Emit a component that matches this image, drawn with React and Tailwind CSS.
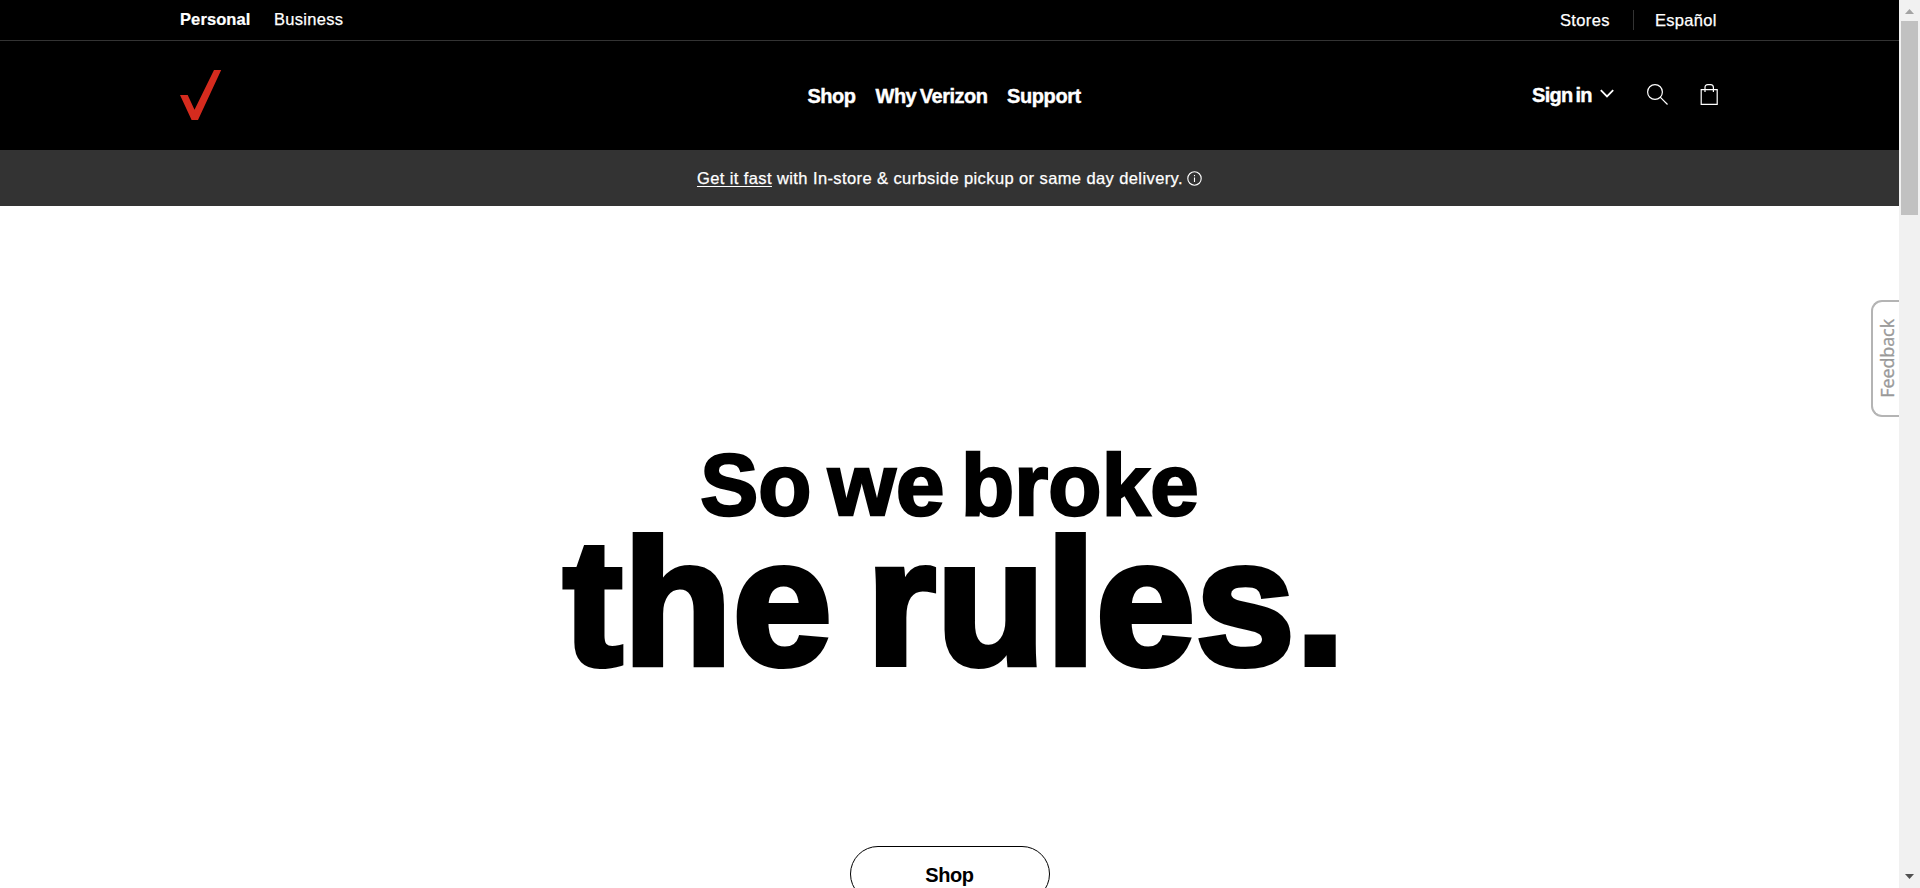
function UtilityBar() {
  return (
    <div className="h-[41px] border-b border-[#333333]">
      <div className="mx-[180px] flex h-full justify-between text-[16.5px] leading-5">
        <div className="flex pt-[9px]">
          <a className="w-[94px] font-bold tracking-[0.1px] [-webkit-text-stroke:0.2px_white]">Personal</a>
          <a className="tracking-[0.3px] [-webkit-text-stroke:0.25px_white]">Business</a>
        </div>
        <div className="flex pt-[10px] mr-px">
          <a className="w-[73px] tracking-[0.35px] [-webkit-text-stroke:0.25px_white]">Stores</a>
          <span className="h-5 w-px bg-[#333333]" />
          <a className="ml-[21px] w-[63px] tracking-[0.3px] [-webkit-text-stroke:0.25px_white]">Español</a>
        </div>
      </div>
    </div>
  );
}

function MainNav() {
  return (
    <header className="flex h-[109px] px-[180px] text-[20px] leading-6 font-bold">
      <svg className="mt-[29px] h-[51px] w-[42px]" viewBox="0 0 42 51" fill="#d52b1e">
        <path d="M34 0h7.2L18 50H11.6L0 25h7.7l6.8 14.8z" />
      </svg>
      <nav className="ml-[585.5px] flex pt-[43px] tracking-[-0.5px] [-webkit-text-stroke:0.4px_white]">
        <a className="w-[68px]">Shop</a>
        <a className="w-[131.5px] whitespace-nowrap [word-spacing:-1.5px]">Why Verizon</a>
        <a className="tracking-[-0.4px]">Support</a>
      </nav>
      <div className="ml-auto flex w-[187px] shrink-0 pt-[42px]">
        <span className="w-[68px] whitespace-nowrap tracking-[-0.7px] [-webkit-text-stroke:0.4px_white] [word-spacing:-2px]">Sign in</span>
        <svg className="mt-1.5 h-[10px] w-[14px]" viewBox="0 0 14 10" fill="none" stroke="white" strokeWidth="1.8">
          <path d="M.8 1.2 7 7.400l6.200-6.200" />
        </svg>
        <svg className="ml-[33px] mt-px h-[21px] w-[21px]" viewBox="0 0 21 21" fill="none" stroke="white" strokeWidth="1.2">
          <circle cx="8" cy="8" r="7.400" />
          <path d="m13.200 13.200 7.300 7.300" />
        </svg>
        <svg className="ml-[32px] mt-px h-[21px] w-[19px]" viewBox="0 0 19 21" fill="none" stroke="white" strokeWidth="1.2">
          <path d="M1.200 5.600h16v14.800h-16zM5 8V3.500Q5 .6 7.800 .6h2.800Q13.400 .6 13.400 3.500V8" />
        </svg>
      </div>
    </header>
  );
}

function Banner() {
  return (
    <div className="flex h-14 shrink-0 items-center justify-center bg-[#333333] text-[16.5px] leading-5">
      <p className="whitespace-nowrap tracking-[0.4px] [-webkit-text-stroke:0.25px_white]">
        <a className="underline underline-offset-2">Get it fast</a> with In-store &amp; curbside pickup or same day delivery.
      </p>
      <svg className="ml-1 h-[15px] w-[15px]" viewBox="0 0 15 15" fill="none" stroke="white" strokeWidth="1.1">
        <circle cx="7.500" cy="7.500" r="6.700" />
        <path d="M7.500 6.500V11M7.500 4v1.300" />
      </svg>
    </div>
  );
}

function Hero() {
  return (
    <main className="flex shrink-0 flex-col items-center text-black">
      <h1 className="flex flex-col items-center pt-[234px] font-bold whitespace-nowrap">
        <span className="text-[87px] leading-[90px] tracking-[0.2px] [-webkit-text-stroke:2.5px_black] [word-spacing:-8px]">So we broke</span>
        <span className="pl-[10px] text-[178px] leading-[146px] tracking-[0.7px] [-webkit-text-stroke:6px_black] [word-spacing:-16px]">the rules.</span>
      </h1>
      <button className="mt-[170px] h-[56px] w-[200px] shrink-0 rounded-full border border-black pt-px text-[20px] font-bold tracking-[-0.4px]">
        Shop
      </button>
    </main>
  );
}

function ScrollBar() {
  return (
    <div className="flex w-[21px] shrink-0 flex-col items-center justify-between bg-[#f1f1f1]">
      <div className="flex flex-col items-center">
        <svg className="mt-[9px] h-[5px] w-[9px]" viewBox="0 0 9 5" fill="#a3a3a3"><path d="M0 5h9L4.500 0z" /></svg>
        <div className="mt-[7px] h-[194px] w-[17px] bg-[#c1c1c1]" />
      </div>
      <svg className="mb-[9px] h-[5px] w-[9px]" viewBox="0 0 9 5" fill="#505050"><path d="M0 0h9L4.500 5z" /></svg>
    </div>
  );
}

export default function App() {
  return (
    <div className="flex h-[888px] w-[1920px] overflow-hidden bg-white font-['Liberation_Sans',Arial,sans-serif]">
      <div className="relative flex w-[1899px] flex-col overflow-hidden text-white">
        <div className="shrink-0 bg-black">
          <UtilityBar />
          <MainNav />
        </div>
        <Banner />
        <Hero />
        <div className="absolute right-0 top-[300px] flex h-[117px] w-[28px] items-center justify-center rounded-l-[11px] border-2 border-r-0 border-[#b4b4b4] bg-white">
          <span className="-mr-[2px] rotate-180 font-['Open_Sans',sans-serif] text-[18px] leading-5 tracking-[-0.1px] text-[#999999] [-webkit-text-stroke:0.3px_#999999] [writing-mode:vertical-rl]">Feedback</span>
        </div>
      </div>
      <ScrollBar />
    </div>
  );
}
